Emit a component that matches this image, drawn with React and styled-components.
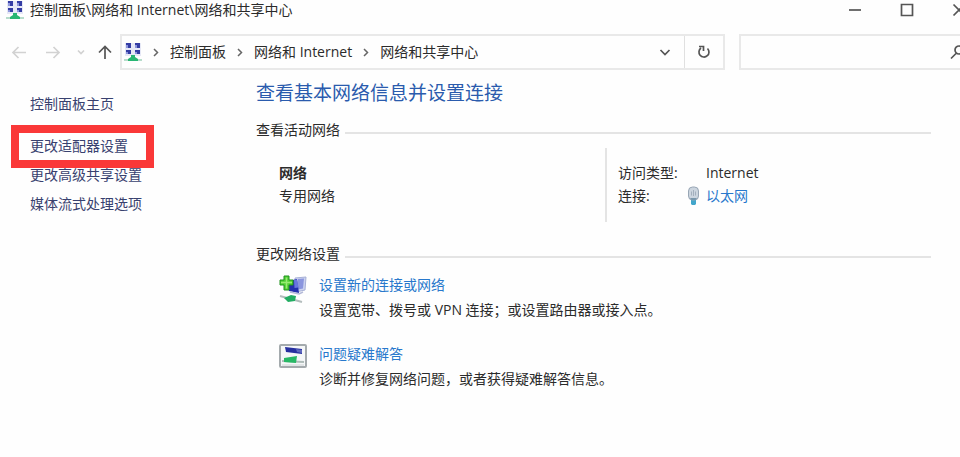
import styled, { createGlobalStyle } from "styled-components";

const GlobalStyle = createGlobalStyle`
  * {
    box-sizing: border-box;
  }
  body {
    margin: 0;
    background-color: #fefefe;
    color: #2b2b2b;
    font-family: "Open Sans", "Noto Sans CJK SC", sans-serif;
    font-size: 14px;
    line-height: 20px;
    overflow: hidden;
  }
`;

/* the window runs a little past the right edge of the screen */
const Window = styled.div`
  width: calc(100% + 25px);
  min-height: 100vh;
`;
const TitleBar = styled.header`
  display: flex;
  align-items: center;
  height: 20px;
  padding-left: 6px;
`;
const Title = styled.h1`
  flex: 1;
  margin: 0 0 0 6px;
  font-size: 14px;
  font-weight: 400;
  white-space: nowrap;
`;
const IconButton = styled.button`
  display: flex;
  align-items: center;
  justify-content: center;
  flex-shrink: 0;
  width: ${({ $width }) => $width}px;
  height: 20px;
  padding: 0;
  border: none;
  background: none;
  color: ${({ $color }) => $color || "#555"};
`;
const Toolbar = styled.div`
  display: flex;
  align-items: center;
  margin-top: 14px;
  padding-right: 10px;
`;
const NavButtons = styled.nav`
  display: flex;
  align-items: center;
  flex-shrink: 0;
  width: 120px;
  padding-left: 2px;
`;
const AddressBar = styled.div`
  display: flex;
  align-items: center;
  flex: 1;
  height: 36px;
  padding-left: 2px;
  border: 2px solid #e9e9e9;
`;
const Crumbs = styled.ol`
  display: flex;
  align-items: center;
  flex: 1;
  margin: 0;
  padding: 0;
  list-style: none;
`;
const Crumb = styled.li`
  display: flex;
  align-items: center;
  white-space: nowrap;
`;
const CrumbLink = styled.a`
  color: #2b2b2b;
  text-decoration: none;
`;
const Refresh = styled.div`
  display: flex;
  align-items: center;
  height: 100%;
  border-left: 1px solid #e0e0e0;
`;
const SearchBox = styled.div`
  display: flex;
  align-items: center;
  width: 236px;
  height: 36px;
  margin-left: 14px;
  padding-right: 8px;
  border: 2px solid #e9e9e9;
`;
const SearchInput = styled.input`
  flex: 1;
  min-width: 0;
  height: 100%;
  padding: 0 8px;
  border: none;
  outline: none;
  background: none;
  font: inherit;
`;
const Body = styled.div`
  display: flex;
  padding-right: 54px;
`;
const Sidebar = styled.aside`
  display: flex;
  flex-direction: column;
  align-items: flex-start;
  gap: 9px;
  width: 256px;
  flex-shrink: 0;
  padding: 24px 0 0 30px;
`;
const SideLink = styled.a`
  position: relative;
  color: #38416f;
  text-decoration: none;
`;
const HomeLink = styled(SideLink)`
  margin-bottom: 13px;
`;
const MarkedLink = styled(SideLink)`
  &::after {
    content: "";
    position: absolute;
    inset: -11px -26px -12px -19px;
    border: 8px solid #fa3838;
  }
`;
const Main = styled.main`
  flex: 1;
  padding-top: 11px;
`;
const Heading = styled.h2`
  margin: 0;
  color: #2a5bad;
  font-size: 19px;
  font-weight: 400;
  line-height: 24px;
`;
const SectionTitle = styled.h3`
  display: flex;
  align-items: center;
  gap: 5px;
  margin: 0;
  font-size: 14px;
  font-weight: 400;

  &::after {
    content: "";
    flex: 1;
    height: 2px;
    margin-top: 6px;
    background-color: #e4e4e4;
  }
`;
const ActiveSection = styled.section`
  margin-top: 15px;
`;
const ChangeSection = styled.section`
  margin-top: 22px;
`;
const Network = styled.div`
  display: grid;
  grid-template-columns: 349fr 326fr;
  margin-top: 8px;
`;
const NetworkName = styled.div`
  padding: 13px 0 0 23px;
  line-height: 23px;
`;
const Details = styled.dl`
  display: grid;
  grid-template-columns: 88px 1fr;
  align-content: start;
  height: 74px;
  margin: 0;
  padding: 13px 0 0 11px;
  border-left: 2px solid #e4e4e4;
  line-height: 23px;
`;
const Value = styled.dd`
  display: flex;
  align-items: center;
  margin: 0;
`;
const EthernetValue = styled(Value)`
  gap: 6px;
  margin-left: -19px;
`;
const Link = styled.a`
  color: #2878cc;
  text-decoration: none;
`;
const Task = styled.div`
  display: flex;
  gap: 12px;
  margin-top: ${({ $gap }) => $gap}px;
  padding-left: 23px;
`;
const TaskText = styled.p`
  margin: 5px 0 0;
`;

const NetworkIcon = () => (
  <svg width="18" height="20" viewBox="0 0 18 20" aria-hidden="true">
    <rect x="1" y="1" width="16" height="13" fill="#e6e8f6" />
    <path d="M2 1h5v5H2zM11 1h5v5h-5zM2 8h5v4H2zM11 8h5v4h-5z" fill="#343da4" />
    <path d="M2 3h2v3H2zM11 3h2v3h-2zM2 10h2v2H2zM11 10h2v2h-2z" fill="#8d96dc" />
    <path d="M7 13h4v2l3 2v2H4v-2l3-2z" fill="#28b673" />
    <path d="M0 17h4v2H0zM14 17h4v2h-4z" fill="#b7dccb" />
  </svg>
);

const Arrow = ({ d }) => (
  <svg width="16" height="16" viewBox="0 0 16 16" fill="none" stroke="currentColor" strokeWidth="1.7" aria-hidden="true">
    <path d={d} />
  </svg>
);

const Separator = () => (
  <svg width="28" height="10" viewBox="0 0 28 10" fill="none" stroke="#666" strokeWidth="1.5" aria-hidden="true">
    <path d="M12 2l3.500 3.500L12 9" />
  </svg>
);

const EthernetIcon = () => (
  <svg width="13" height="20" viewBox="0 0 13 20" aria-hidden="true">
    <path d="M4 13h5v5l-1 1H5l-1-1z" fill="#42a6cb" />
    <rect x="1.5" y="1" width="10" height="13" rx="4" fill="#ccd5df" stroke="#98a6b5" />
    <path d="M4.5 5.5v4M6.5 4v6M8.5 5.5v4" stroke="#a3afbd" />
    <path d="M3 12h7l-1.5 2h-4z" fill="#7998ad" />
  </svg>
);

const NewConnectionIcon = () => (
  <svg width="28" height="30" viewBox="0 0 28 30" aria-hidden="true">
    <path d="M16 3l11-1-1 13-9 2z" fill="#cbd2ef" stroke="#a7b0d6" />
    <path d="M19 4l6-.5-1 10-5 1z" fill="#8a95de" />
    <path d="M9 6l9-2 2 14-10-2z" fill="#2430ad" />
    <path d="M15 5l3-.5 1.5 8-4 .5z" fill="#6876df" />
    <path d="M11 17l9 2 4-2" fill="none" stroke="#b5bbd9" strokeWidth="1.5" />
    <path d="M1 21l22 6" stroke="#b4bdbd" strokeWidth="2" />
    <path d="M5 23l7-3 5 1-1 5-7 1z" fill="#23ad62" />
    <path d="M5 1h5v4h4v5h-4v5H5v-5H1V5h4z" fill="#51cf35" stroke="#21931f" />
    <path d="M7.5 2.500v11M2 7.500h11" stroke="#98eb73" strokeWidth="1.5" />
  </svg>
);

const TroubleshootIcon = () => (
  <svg width="28" height="24" viewBox="0 0 28 24" aria-hidden="true">
    <rect x="1" y="1" width="26" height="22" rx="1" fill="#f5f7f8" stroke="#a4aaad" strokeWidth="2" />
    <path d="M6 3l17 2v5L7 8z" fill="#2730a0" />
    <path d="M17 5l6 1v3l-5-1z" fill="#5f68be" />
    <path d="M3 17l22 1" stroke="#aebbb8" strokeWidth="2" />
    <path d="M5 14l13-2-1 7-12-1z" fill="#28b865" />
    <path d="M3 21h22" stroke="#ced2d4" />
  </svg>
);

const crumbs = ["控制面板", "网络和 Internet", "网络和共享中心"];

const App = () => {
  return (
    <>
      <GlobalStyle />
      <Window>
        <TitleBar>
          <NetworkIcon />
          <Title>控制面板\网络和 Internet\网络和共享中心</Title>
          <IconButton $width={52} aria-label="最小化">
            <Arrow d="M2 8h12" />
          </IconButton>
          <IconButton $width={52} aria-label="最大化">
            <Arrow d="M2.5 2.5h11v11h-11z" />
          </IconButton>
          <IconButton $width={52} aria-label="关闭">
            <Arrow d="M2.5 2.5l11 11M13.5 2.5l-11 11" />
          </IconButton>
        </TitleBar>

        <Toolbar>
          <NavButtons>
            <IconButton $width={34} $color="#d2d2d2" aria-label="后退">
              <Arrow d="M15 8.5H2M7.5 3L2 8.5 7.5 14" />
            </IconButton>
            <IconButton $width={34} $color="#d2d2d2" aria-label="前进">
              <Arrow d="M1 8.5h13M8.5 3L14 8.5 8.5 14" />
            </IconButton>
            <IconButton $width={22} $color="#d2d2d2" aria-label="最近浏览的位置">
              <Arrow d="M5 6.5l3 3 3-3" />
            </IconButton>
            <IconButton $width={26} aria-label="上移">
              <Arrow d="M8 15V2.5M2 8.5l6-6 6 6" />
            </IconButton>
          </NavButtons>
          <AddressBar>
            <NetworkIcon />
            <Crumbs>
              {crumbs.map((name) => (
                <Crumb key={name}>
                  <Separator />
                  <CrumbLink href="#">{name}</CrumbLink>
                </Crumb>
              ))}
            </Crumbs>
            <IconButton $width={38} aria-label="以前的位置">
              <Arrow d="M3.5 6L8 10.5 12.5 6" />
            </IconButton>
            <Refresh>
              <IconButton $width={38} aria-label="刷新">
                <Arrow d="M11.5 4.5A5 5 0 1 1 5 4M3 2.5h4.5V7" />
              </IconButton>
            </Refresh>
          </AddressBar>
          <SearchBox>
            <SearchInput type="search" aria-label="搜索" />
            <IconButton $width={16} aria-label="开始搜索">
              <Arrow d="M7 9.500L2 14.500M14 6a4 4 0 1 1-8 0 4 4 0 0 1 8 0z" />
            </IconButton>
          </SearchBox>
        </Toolbar>

        <Body>
          <Sidebar>
            <HomeLink href="#">控制面板主页</HomeLink>
            <MarkedLink href="#">更改适配器设置</MarkedLink>
            <SideLink href="#">更改高级共享设置</SideLink>
            <SideLink href="#">媒体流式处理选项</SideLink>
          </Sidebar>
          <Main>
            <Heading>查看基本网络信息并设置连接</Heading>
            <ActiveSection>
              <SectionTitle>查看活动网络</SectionTitle>
              <Network>
                <NetworkName>
                  <strong>网络</strong>
                  <div>专用网络</div>
                </NetworkName>
                <Details>
                  <dt>访问类型:</dt>
                  <Value>Internet</Value>
                  <dt>连接:</dt>
                  <EthernetValue>
                    <EthernetIcon />
                    <Link href="#">以太网</Link>
                  </EthernetValue>
                </Details>
              </Network>
            </ActiveSection>
            <ChangeSection>
              <SectionTitle>更改网络设置</SectionTitle>
              <Task $gap={11}>
                <NewConnectionIcon />
                <div>
                  <Link href="#">设置新的连接或网络</Link>
                  <TaskText>设置宽带、拨号或 VPN 连接；或设置路由器或接入点。</TaskText>
                </div>
              </Task>
              <Task $gap={24}>
                <TroubleshootIcon />
                <div>
                  <Link href="#">问题疑难解答</Link>
                  <TaskText>诊断并修复网络问题，或者获得疑难解答信息。</TaskText>
                </div>
              </Task>
            </ChangeSection>
          </Main>
        </Body>
      </Window>
    </>
  );
};

export default App;
